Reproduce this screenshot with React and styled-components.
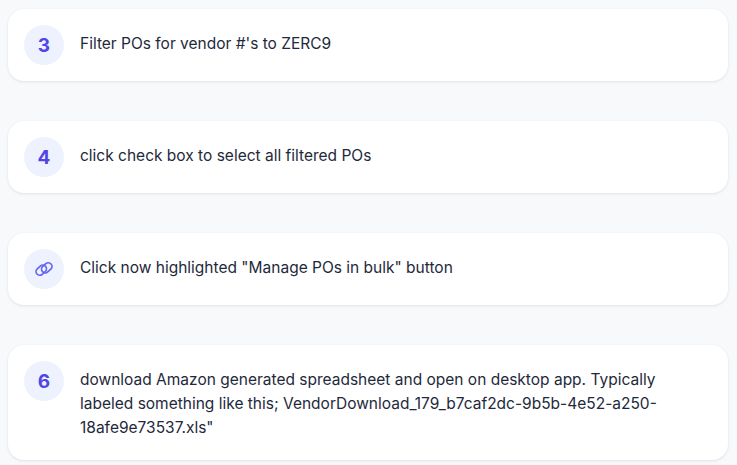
import React from 'react'
import styled, { createGlobalStyle } from 'styled-components'

const Global = createGlobalStyle`
html, body {
  margin: 0;
  background: #f8f9fb;
  overflow: hidden;
}
`

const Page = styled.div`
  width: 737px;
  height: 465px;
  box-sizing: border-box;
  padding: 9px 9px 0 8px;
  display: flex;
  flex-direction: column;
  gap: 40px;
  font-family: "Inter", "Liberation Sans", sans-serif;
  overflow: hidden;
`

const Card = styled.div`
  display: flex;
  align-items: flex-start;
  gap: 16px;
  padding: 16px;
  background: #ffffff;
  border-radius: 16px;
  box-shadow: 0 1px 3px rgba(15, 23, 42, 0.1);
`

const Badge = styled.div`
  flex: none;
  width: 40px;
  height: 40px;
  border-radius: 50%;
  background: #eef2ff;
  color: #4f46e5;
  display: flex;
  align-items: center;
  justify-content: center;
  font-size: 19px;
  font-weight: 700;
`

const Text = styled.p`
  margin: 0;
  padding: 7px 0 4px;
  font-size: 15.5px;
  line-height: 24px;
  color: #1e293b;
`

const LinkIcon = () => (
  <svg width="20" height="20" viewBox="0 0 20 20" fill="none" stroke="#6366f1" strokeWidth="1.7">
    <rect x="1.5" y="7.5" width="11.5" height="7.4" rx="3.7" transform="rotate(-42 7.2 11.2)" />
    <rect x="7" y="5.1" width="11.5" height="7.4" rx="3.7" transform="rotate(-42 12.8 8.8)" />
  </svg>
)

const steps = [
  { badge: '3', text: "Filter POs for vendor #'s to ZERC9" },
  { badge: '4', text: 'click check box to select all filtered POs' },
  { badge: <LinkIcon />, text: 'Click now highlighted "Manage POs in bulk" button' },
  {
    badge: '6',
    text: 'download Amazon generated spreadsheet and open on desktop app. Typically labeled something like this; VendorDownload_179_b7caf2dc-9b5b-4e52-a250-18afe9e73537.xls"',
  },
]

const App = () => (
  <Page>
    <Global />
    {steps.map((step, i) => (
      <Card key={i}>
        <Badge>{step.badge}</Badge>
        <Text>{step.text}</Text>
      </Card>
    ))}
  </Page>
)

export default App
